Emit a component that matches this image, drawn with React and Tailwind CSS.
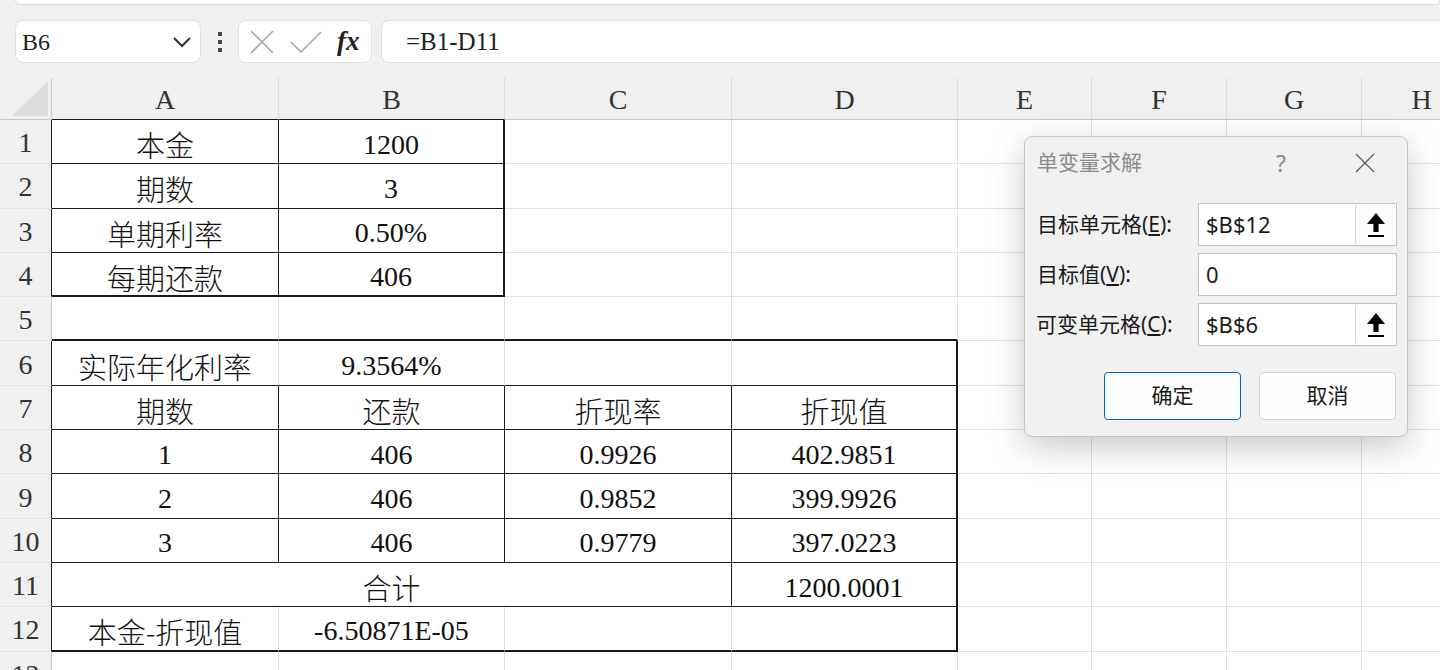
const CELL_FONT = {
  fontFamily: "'Liberation Serif', 'Noto Sans CJK SC', serif",
};
const CJK_FONT = {
  fontFamily: "'Noto Sans CJK SC', sans-serif",
};
const UI_FONT = {
  fontFamily: "'Noto Sans', 'Noto Sans CJK SC', sans-serif",
};

// border keys: g = grid line, b = thin black, B = medium black
const R = {
  g: "border-r border-r-[#e1e1e1]",
  b: "border-r border-r-[#1a1a1a]",
  B: "border-r-2 border-r-[#1a1a1a]",
};
const BOT = {
  g: "border-b border-b-[#e1e1e1]",
  b: "border-b border-b-[#1a1a1a]",
  B: "border-b-2 border-b-[#1a1a1a]",
};

const COLS = ["A", "B", "C", "D", "E", "F", "G", "H"];
const WIDTHS = [
  "w-[227px]",
  "w-[226px]",
  "w-[227px]",
  "w-[226px]",
  "w-[134px]",
  "w-[135px]",
  "w-[135px]",
  "w-[120px]",
];

const empty = (n) => Array.from({ length: n }, () => ({ t: "", r: "g", b: "g" }));

const ROWS = [
  { head: "b", cells: [{ t: "本金", r: "b", b: "b" }, { t: "1200", r: "B", b: "b" }, ...empty(6)] },
  { head: "b", cells: [{ t: "期数", r: "b", b: "b" }, { t: "3", r: "B", b: "b" }, ...empty(6)] },
  { head: "b", cells: [{ t: "单期利率", r: "b", b: "b" }, { t: "0.50%", r: "B", b: "b" }, ...empty(6)] },
  { head: "b", cells: [{ t: "每期还款", r: "b", b: "B" }, { t: "406", r: "B", b: "B" }, ...empty(6)] },
  {
    head: "g",
    cells: [
      { t: "", r: "g", b: "B" },
      { t: "", r: "g", b: "B" },
      { t: "", r: "g", b: "B" },
      { t: "", r: "g", b: "B" },
      ...empty(4),
    ],
  },
  {
    head: "b",
    cells: [
      { t: "实际年化利率", r: "g", b: "b" },
      { t: "9.3564%", r: "g", b: "b" },
      { t: "", r: "g", b: "b" },
      { t: "", r: "B", b: "b" },
      ...empty(4),
    ],
  },
  {
    head: "b",
    cells: [
      { t: "期数", r: "b", b: "b" },
      { t: "还款", r: "b", b: "b" },
      { t: "折现率", r: "b", b: "b" },
      { t: "折现值", r: "B", b: "b" },
      ...empty(4),
    ],
  },
  {
    head: "b",
    cells: [
      { t: "1", r: "b", b: "b" },
      { t: "406", r: "b", b: "b" },
      { t: "0.9926", r: "b", b: "b" },
      { t: "402.9851", r: "B", b: "b" },
      ...empty(4),
    ],
  },
  {
    head: "b",
    cells: [
      { t: "2", r: "b", b: "b" },
      { t: "406", r: "b", b: "b" },
      { t: "0.9852", r: "b", b: "b" },
      { t: "399.9926", r: "B", b: "b" },
      ...empty(4),
    ],
  },
  {
    head: "b",
    cells: [
      { t: "3", r: "b", b: "b" },
      { t: "406", r: "b", b: "b" },
      { t: "0.9779", r: "b", b: "b" },
      { t: "397.0223", r: "B", b: "b" },
      ...empty(4),
    ],
  },
  {
    head: "b",
    cells: [
      { t: "合计", r: "b", b: "b", w: "w-[680px]" },
      { t: "1200.0001", r: "B", b: "b" },
      ...empty(4),
    ],
    merged: true,
  },
  {
    head: "b",
    cells: [
      { t: "本金-折现值", r: "g", b: "B" },
      { t: "-6.50871E-05", r: "g", b: "B" },
      { t: "", r: "g", b: "B" },
      { t: "", r: "B", b: "B" },
      ...empty(4),
    ],
  },
  { head: "g", cells: empty(8) },
];

const isCjk = (s) => /[\u4e00-\u9fff]/.test(s);

function UpArrowButton() {
  return (
    <div className="w-[41px] shrink-0 h-full bg-[#fdfdfd] border-l border-[#d4d4d4] rounded-[3px] flex items-center justify-center">
      <svg width="20" height="26" viewBox="0 0 20 26">
        <path d="M10 1 L19 12 H12.6 V20 H7.4 V12 H1 Z" fill="#000" />
        <rect x="2" y="23" width="16" height="2" fill="#000" />
      </svg>
    </div>
  );
}

function GoalSeekDialog() {
  return (
    <div
      className="absolute left-[1024px] top-[136px] w-[384px] h-[301px] bg-[#f0f0f0] border border-[#c6c6c6] rounded-[8px] shadow-[0_10px_36px_rgba(0,0,0,0.22)] text-[#1a1a1a]"
      style={UI_FONT}
    >
      <div className="h-[52px] flex items-center pl-[12px] relative">
        <span className="text-[21px] text-[#8c8c8c]">单变量求解</span>
        <span className="absolute left-[251px] top-[9px] text-[23px] text-[#8c8c8c]">?</span>
        <svg className="absolute left-[330px] top-[16px]" width="20" height="20" viewBox="0 0 20 20">
          <path d="M1 1 L19 19 M19 1 L1 19" stroke="#5a5a5a" strokeWidth="1.3" />
        </svg>
      </div>

      <div className="flex flex-col gap-[7px] mt-[14px]">
        <div className="flex items-center h-[43px]">
          <label className="w-[173px] pl-[12px] text-[21px]">
            目标单元格(<span className="underline">E</span>):
          </label>
          <div className="w-[199px] h-[43px] bg-white border border-[#c2c2c2] flex items-center justify-between">
            <span className="pl-[7px] text-[22px]">$B$12</span>
            <UpArrowButton />
          </div>
        </div>
        <div className="flex items-center h-[43px]">
          <label className="w-[173px] pl-[12px] text-[21px]">
            目标值(<span className="underline">V</span>):
          </label>
          <div className="w-[199px] h-[43px] bg-white border border-[#c2c2c2] flex items-center">
            <span className="pl-[7px] text-[22px]">0</span>
          </div>
        </div>
        <div className="flex items-center h-[43px]">
          <label className="w-[173px] pl-[11px] text-[21px]">
            可变单元格(<span className="underline">C</span>):
          </label>
          <div className="w-[199px] h-[43px] bg-white border border-[#c2c2c2] flex items-center justify-between">
            <span className="pl-[7px] text-[22px]">$B$6</span>
            <UpArrowButton />
          </div>
        </div>
      </div>

      <div className="flex gap-[18px] pl-[79px] mt-[26px]">
        <button className="w-[137px] h-[48px] bg-[#fdfdfd] border border-[#0067c0] rounded-[4px] text-[21px]">
          确定
        </button>
        <button className="w-[137px] h-[48px] bg-[#fdfdfd] border border-[#d0d0d0] rounded-[4px] text-[21px]">
          取消
        </button>
      </div>
    </div>
  );
}

function FormulaBar() {
  return (
    <div className="flex items-center h-[43px] mt-[15px]">
      <div className="ml-[15px] w-[186px] shrink-0 h-[43px] bg-white border border-[#e0e0e0] rounded-[8px] flex items-center justify-between pl-[6px] pr-[8px]">
        <span className="text-[24px] text-[#222]" style={CELL_FONT}>
          B6
        </span>
        <svg width="20" height="12" viewBox="0 0 20 12">
          <path d="M2 2 L10 10 L18 2" fill="none" stroke="#333" strokeWidth="2" />
        </svg>
      </div>
      <div className="w-[37px] shrink-0 flex flex-col items-center gap-[4px]">
        <span className="w-[4px] h-[4px] bg-[#444]" />
        <span className="w-[4px] h-[4px] bg-[#444]" />
        <span className="w-[4px] h-[4px] bg-[#444]" />
      </div>
      <div className="w-[134px] shrink-0 h-[43px] bg-white border border-[#e0e0e0] rounded-[8px] flex items-center pl-[10px] gap-[15px]">
        <svg width="26" height="24" viewBox="0 0 26 24">
          <path d="M2 1 L24 23 M24 1 L2 23" stroke="#a8a8a8" strokeWidth="1.6" />
        </svg>
        <svg width="32" height="22" viewBox="0 0 32 22">
          <path d="M1 11 L11 21 L31 1" fill="none" stroke="#a8a8a8" strokeWidth="1.6" />
        </svg>
        <span className="text-[27px] italic font-bold text-[#222] leading-none" style={CELL_FONT}>
          fx
        </span>
      </div>
      <div className="ml-[9px] flex-1 h-[43px] bg-white border border-[#e0e0e0] border-r-0 rounded-l-[8px] flex items-center pl-[24px]">
        <span className="text-[25px] text-[#222]" style={CELL_FONT}>
          =B1-D11
        </span>
      </div>
    </div>
  );
}

function ColumnHeader() {
  return (
    <div className="flex h-[42px]">
      <div className="w-[52px] shrink-0 h-full border-r border-b border-[#c8c8c8] relative flex items-end justify-end pr-[3px] pb-[3px]">
        <svg width="36" height="35" viewBox="0 0 36 35">
          <path d="M36 0 L36 35 L0 35 Z" fill="#dcdcdc" />
        </svg>
      </div>
      {COLS.map((c, i) => (
        <div
          key={c}
          className={`${WIDTHS[i]} shrink-0 h-full flex items-center justify-center text-[28px] text-[#333] border-r border-r-[#dadada] ${
            i < 2 ? "border-b border-b-[#1a1a1a]" : "border-b border-b-[#c8c8c8]"
          }`}
          style={CELL_FONT}
        >
          <span className="pt-[2px]">{c}</span>
        </div>
      ))}
    </div>
  );
}

export default function App() {
  return (
    <div className="w-[1440px] h-[670px] overflow-hidden bg-[#f0f0f0] relative">
      <div className="ml-[15px] h-[5px] bg-white border border-t-0 border-[#dcdcdc] rounded-b-[8px]" />
      <FormulaBar />
      <div className="mt-[15px]">
        <ColumnHeader />
        {ROWS.map((row, ri) => (
          <div key={ri} className="flex h-[44.3px]">
            <div
              className={`w-[52px] shrink-0 h-full flex items-center justify-center text-[28px] text-[#333] border-b border-b-[#e2e2e2] ${
                row.head === "b" ? "border-r border-r-[#1a1a1a]" : "border-r border-r-[#c8c8c8]"
              }`}
              style={CELL_FONT}
            >
              <span className="pt-[3px]">{ri + 1}</span>
            </div>
            {row.cells.map((cell, ci) => {
              const wi = row.merged ? ci + 2 : ci;
              const w = cell.w || WIDTHS[wi];
              const cjk = isCjk(cell.t);
              return (
                <div
                  key={ci}
                  className={`${w} shrink-0 h-full bg-white flex items-center justify-center text-[#111] ${R[cell.r]} ${BOT[cell.b]}`}
                >
                  {cjk ? (
                    <span className="pt-[6px] leading-none whitespace-nowrap text-[29px] font-light" style={CJK_FONT}>
                      {cell.t}
                    </span>
                  ) : (
                    <span className="pt-[6px] leading-none whitespace-nowrap text-[28px]" style={CELL_FONT}>
                      {cell.t}
                    </span>
                  )}
                </div>
              );
            })}
          </div>
        ))}
      </div>
      <GoalSeekDialog />
    </div>
  );
}
